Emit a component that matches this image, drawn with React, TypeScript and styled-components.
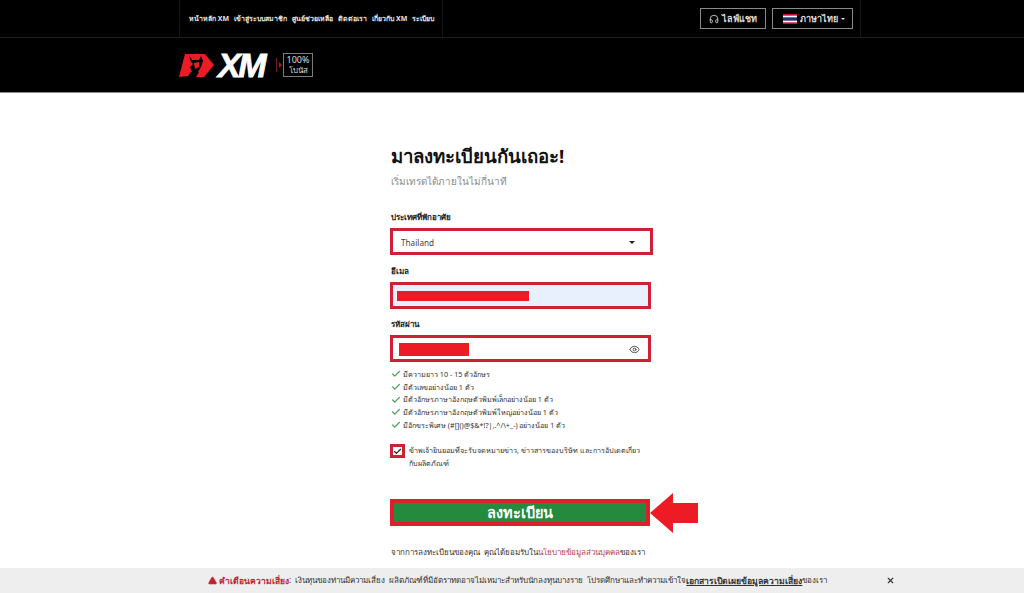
import * as React from 'react';
import styled, { createGlobalStyle } from 'styled-components';
import { Headphones, Eye, Check, X, TriangleAlert } from 'lucide-react';

const FONT = '"Noto Sans", "Liberation Sans", Tahoma, sans-serif';

const GlobalStyle = createGlobalStyle`
  html, body {
    margin: 0;
    padding: 0;
    height: 100%;
    overflow: hidden;
    background: #fff;
    font-family: ${FONT};
  }
  * { box-sizing: border-box; }
`;

const Page = styled.div`
  width: 1024px;
  height: 593px;
  overflow: hidden;
  position: relative;
`;

const TopBar = styled.header`
  height: 38px;
  background: #000;
  border-bottom: 1px solid #1f1f1f;
`;

const TopInner = styled.div`
  width: 682px;
  height: 37px;
  margin-left: 179px;
  display: flex;
  align-items: center;
  justify-content: space-between;
  border-right: 1px solid #161616;
  padding-right: 7px;
`;

const Nav = styled.nav`
  width: 264px;
  height: 37px;
  padding-left: 9px;
  display: flex;
  align-items: center;
  gap: 5px;
  border-left: 1px solid #161616;
  border-right: 1px solid #161616;
  white-space: nowrap;
`;

const NavLink = styled.a`
  color: #e6e6e6;
  font-size: 7px;
  font-weight: 700;
`;

const TopActions = styled.div`
  display: flex;
  gap: 6px;
`;

const TopButton = styled.button<{ $w: number; $pl?: number }>`
  width: ${(p) => p.$w}px;
  height: 21px;
  padding: 0 0 0 ${(p) => p.$pl || 0}px;
  background: transparent;
  border: 1px solid #8a8a8a;
  color: #ddd;
  font-family: ${FONT};
  font-size: 9px;
  font-weight: 700;
  display: flex;
  align-items: center;
  justify-content: center;
  gap: 3px;
`;

const Flag = styled.svg`
  width: 14px;
  height: 10px;
  display: block;
`;

const Caret = styled.span<{ $color: string; $size: number }>`
  width: 0;
  height: 0;
  border-left: ${(p) => p.$size}px solid transparent;
  border-right: ${(p) => p.$size}px solid transparent;
  border-top: ${(p) => p.$size}px solid ${(p) => p.$color};
`;

const LogoBar = styled.div`
  height: 55px;
  background: #000;
  border-bottom: 1px solid #8c8c8c;
  padding: 15px 0 0 179px;
  display: flex;
  align-items: flex-start;
`;

const Mark = styled.svg`
  width: 35px;
  height: 24px;
  margin-top: 1px;
  display: block;
`;

const Wordmark = styled.span`
  width: 50px;
  color: #fff;
  font-family: "Liberation Sans", sans-serif;
  font-size: 34px;
  line-height: 25px;
  font-weight: 700;
  font-style: italic;
  letter-spacing: -2.5px;
  margin-left: 4px;
  -webkit-text-stroke: 0.8px #fff;
`;

const BonusDivider = styled.span`
  width: 1px;
  height: 14px;
  margin: 5px 0 0 8px;
  background: #7d1420;
`;

const BonusTip = styled.span`
  width: 0;
  height: 0;
  margin: 9px 0 0 2px;
  border-top: 3px solid transparent;
  border-bottom: 3px solid transparent;
  border-left: 3px solid #a5162a;
`;

const BonusBox = styled.span`
  width: 30px;
  height: 24px;
  margin-left: 1px;
  border: 1px solid #7c7c7c;
  color: #ddd;
  text-align: center;
  display: flex;
  flex-direction: column;
  justify-content: center;
`;

const BonusPercent = styled.span`
  font-size: 9px;
  line-height: 10px;
`;

const BonusWord = styled.span`
  font-size: 8px;
  line-height: 10px;
`;

const Main = styled.main`
  position: relative;
  width: 262px;
  margin-left: 391px;
  padding-top: 49px;
`;

const Title = styled.h1`
  margin: 0;
  font-size: 18.6px;
  line-height: 28px;
  font-weight: 700;
  color: #111;
  white-space: nowrap;
`;

const Subtitle = styled.p`
  margin: 3px 0 0;
  font-size: 10px;
  line-height: 16px;
  color: #8c8c8c;
`;

const Label = styled.label<{ $top: number }>`
  display: block;
  margin-top: ${(p) => p.$top}px;
  font-size: 8px;
  line-height: 12px;
  font-weight: 700;
  color: #222;
`;

const Field = styled.div<{ $w: number; $pl: number; $pr: number; $bg?: string }>`
  width: ${(p) => p.$w}px;
  height: 27px;
  margin: 5px 0 0 -1px;
  border: 3px solid #cc2233;
  background: ${(p) => p.$bg || '#fff'};
  padding: 1px ${(p) => p.$pr}px 0 ${(p) => p.$pl}px;
  display: flex;
  align-items: center;
  justify-content: space-between;
  font-size: 8.2px;
  color: #444;
`;

const Redaction = styled.span<{ $w: number; $h: number }>`
  width: ${(p) => p.$w}px;
  height: ${(p) => p.$h}px;
  background: #ed1c24;
`;

const Rules = styled.ul`
  list-style: none;
  margin: 6px 0 0;
  padding: 0;
`;

const Rule = styled.li`
  height: 12.7px;
  display: flex;
  align-items: center;
  gap: 2px;
  font-size: 7.2px;
  color: #333;
  white-space: nowrap;
  svg { color: #4f9e5d; flex: none; }
`;

const Consent = styled.div`
  margin: 13px 0 0 -1px;
  display: flex;
  gap: 4px;
  font-size: 7.2px;
  line-height: 13px;
  color: #333;
  white-space: nowrap;
`;

const CheckBox = styled.span`
  width: 15px;
  height: 14px;
  flex: none;
  border: 3px solid #cc2233;
  display: flex;
  align-items: center;
  justify-content: center;
  color: #222;
`;

const SubmitButton = styled.button`
  display: block;
  width: 260px;
  height: 27px;
  margin: 29px 0 0 -1px;
  padding: 0;
  border: 4px solid #dc1f2c;
  background: #248a3d;
  color: #fff;
  font-family: ${FONT};
  font-size: 14.5px;
  line-height: 19px;
  font-weight: 700;
`;

const Arrow = styled.svg`
  position: absolute;
  left: 259px;
  top: 400px;
  width: 48px;
  height: 40px;
`;

const Terms = styled.p`
  margin: 20px 0 0;
  font-size: 8px;
  word-spacing: 2px;
  line-height: 12px;
  color: #333;
  white-space: nowrap;
`;

const TermsLink = styled.a`
  color: #c0394b;
`;

const RiskBar = styled.footer`
  position: absolute;
  left: 0;
  right: 0;
  bottom: 0;
  height: 25px;
  background: #eee;
  display: flex;
  align-items: center;
  padding-left: 208px;
  font-size: 8px;
  word-spacing: 2px;
  color: #333;
  white-space: pre;
`;

const RiskLabel = styled.strong`
  color: #c8202f;
  font-size: 8.5px;
  margin-left: 2px;
`;

const RiskLink = styled.a`
  font-size: 8.6px;
  font-weight: 700;
  text-decoration: underline;
`;

const CloseButton = styled.button`
  position: absolute;
  left: 886px;
  top: 8px;
  width: 9px;
  height: 9px;
  padding: 0;
  border: 0;
  background: transparent;
  color: #333;
  display: flex;
`;

const NAV = ['หน้าหลัก XM', 'เข้าสู่ระบบสมาชิก', 'ศูนย์ช่วยเหลือ', 'ติดต่อเรา', 'เกี่ยวกับ XM', 'ระเบียบ'];

const RULES = [
  'มีความยาว 10 - 15 ตัวอักษร',
  'มีตัวเลขอย่างน้อย 1 ตัว',
  'มีตัวอักษรภาษาอังกฤษตัวพิมพ์เล็กอย่างน้อย 1 ตัว',
  'มีตัวอักษรภาษาอังกฤษตัวพิมพ์ใหญ่อย่างน้อย 1 ตัว',
  'มีอักขระพิเศษ (#[]()@$&*!?|,.^/\\+_-) อย่างน้อย 1 ตัว',
];

const App: React.FC = () => {
  return (
    <Page>
      <GlobalStyle />
      <TopBar>
        <TopInner>
          <Nav>
            {NAV.map((item) => (
              <NavLink key={item}>{item}</NavLink>
            ))}
          </Nav>
          <TopActions>
            <TopButton $w={66}>
              <Headphones size={10} />
              ไลฟ์แชท
            </TopButton>
            <TopButton $w={81} $pl={3}>
              <Flag viewBox="0 0 14 10">
                <rect width="14" height="10" fill="#c8102e" />
                <rect y="1.7" width="14" height="6.6" fill="#fff" />
                <rect y="3.3" width="14" height="3.4" fill="#2d2a6e" />
              </Flag>
              ภาษาไทย
              <Caret $color="#ddd" $size={2} />
            </TopButton>
          </TopActions>
        </TopInner>
      </TopBar>

      <LogoBar>
        <Mark viewBox="0 0 35 24">
          <path d="M6 0 L26 0 L35 11 L25 23 L17 23 L20 18 L12 18 L9 22 L0 23 Z" fill="#ed1c24" />
          <path d="M10 1 L13 6 L20 6 L22 2 L24 7 L22 13 L19 18 L13 18 L11 13 L14 10 L12 8 Z" fill="#000" />
          <path d="M15 9 L20 8 L20 13 L16 15 Z" fill="#ed1c24" />
        </Mark>
        <Wordmark>XM</Wordmark>
        <BonusDivider />
        <BonusTip />
        <BonusBox>
          <BonusPercent>100%</BonusPercent>
          <BonusWord>โบนัส</BonusWord>
        </BonusBox>
      </LogoBar>

      <Main>
        <Title>มาลงทะเบียนกันเถอะ!</Title>
        <Subtitle>เริ่มเทรดได้ภายในไม่กี่นาที</Subtitle>

        <Label $top={22}>ประเทศที่พักอาศัย</Label>
        <Field $w={263} $pl={8} $pr={15}>
          Thailand
          <Caret $color="#222" $size={3} />
        </Field>

        <Label $top={10}>อีเมล</Label>
        <Field $w={261} $pl={4} $pr={8} $bg="#e8f0fe">
          <Redaction $w={132} $h={10} />
        </Field>

        <Label $top={9}>รหัสผ่าน</Label>
        <Field $w={261} $pl={6} $pr={8}>
          <Redaction $w={70} $h={13} />
          <Eye size={11} color="#444" />
        </Field>

        <Rules>
          {RULES.map((rule) => (
            <Rule key={rule}>
              <Check size={10} strokeWidth={3} />
              {rule}
            </Rule>
          ))}
        </Rules>

        <Consent>
          <CheckBox>
            <Check size={9} strokeWidth={3} />
          </CheckBox>
          <span>
            ข้าพเจ้ายินยอมที่จะรับจดหมายข่าว, ข่าวสารของบริษัท และการอัปเดตเกี่ยว
            <br />
            กับผลิตภัณฑ์
          </span>
        </Consent>

        <SubmitButton>ลงทะเบียน</SubmitButton>
        <Arrow viewBox="0 0 48 40">
          <path d="M0 20 L23 0 L23 10 L48 10 L48 30 L23 30 L23 40 Z" fill="#ed1c24" />
        </Arrow>

        <Terms>
          จากการลงทะเบียนของคุณ คุณได้ยอมรับใน<TermsLink>นโยบายข้อมูลส่วนบุคคล</TermsLink>ของเรา
        </Terms>
      </Main>

      <RiskBar>
        <TriangleAlert size={9} color="#c8202f" fill="#c8202f" />
        <RiskLabel>คำเตือนความเสี่ยง</RiskLabel>
        <span>: เงินทุนของท่านมีความเสี่ยง ผลิตภัณฑ์ที่มีอัตราทดอาจไม่เหมาะสำหรับนักลงทุนบางราย โปรดศึกษาและทำความเข้าใจ</span>
        <RiskLink>เอกสารเปิดเผยข้อมูลความเสี่ยง</RiskLink>
        <span>ของเรา</span>
        <CloseButton>
          <X size={9} strokeWidth={3} />
        </CloseButton>
      </RiskBar>
    </Page>
  );
};

export default App;
